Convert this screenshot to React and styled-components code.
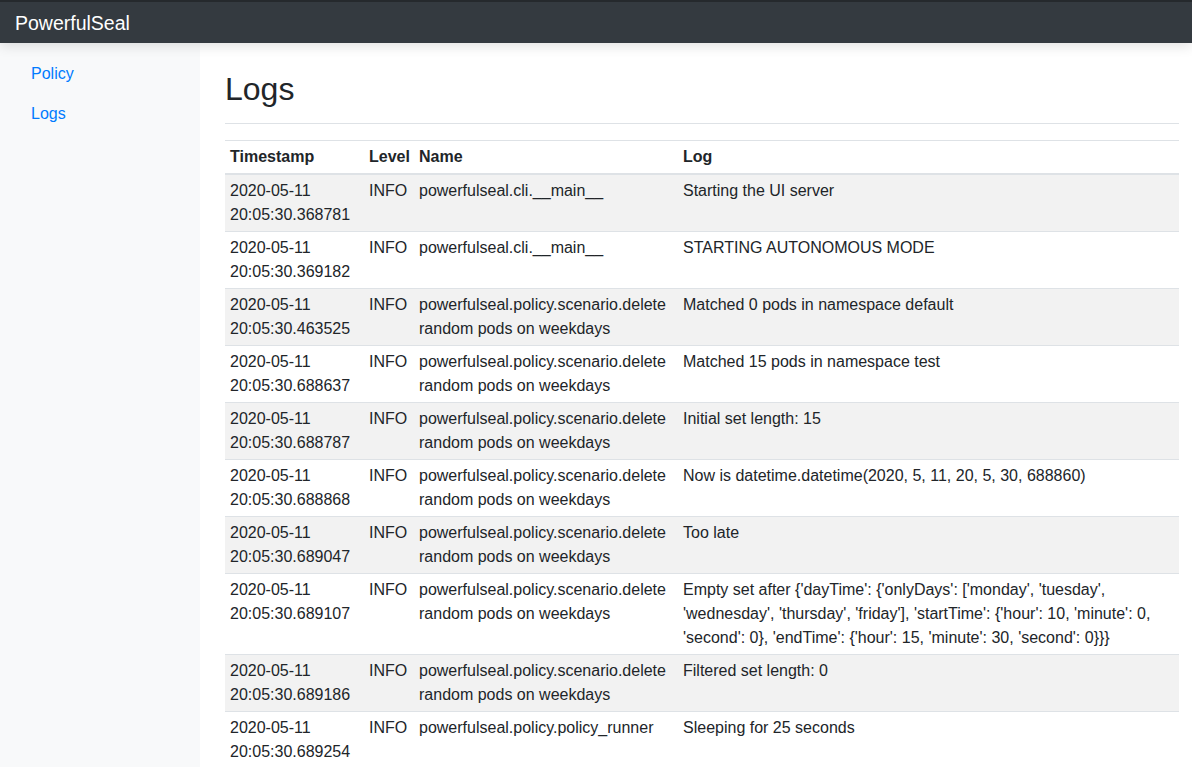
import React from 'react';
import styled, { createGlobalStyle } from 'styled-components';

const GlobalStyle = createGlobalStyle`
    * { box-sizing: border-box; }
    body {
        margin: 0;
        font-family: "Liberation Sans", Arial, sans-serif;
        font-size: 16px;
        line-height: 1.5;
        color: #212529;
        background: #fff;
    }
`;

const Navbar = styled.nav`
    position: relative;
    z-index: 2;
    height: 43px;
    background: #343a40;
    border-top: 2px solid #25292d;
    display: flex;
    align-items: center;
    padding: 0 15px;
    box-shadow: 0 3px 12px rgba(0, 0, 0, 0.12);
`;

const Brand = styled.a`
    color: #fff;
    font-size: 19.5px;
    line-height: 30px;
    text-decoration: none;
`;

const Body = styled.div`
    display: flex;
    min-height: calc(100vh - 43px);
`;

const Sidebar = styled.aside`
    width: 200px;
    flex: none;
    background: #f8f9fa;
    padding: 11px 15px 0;
`;

const NavList = styled.ul`
    list-style: none;
    margin: 0;
    padding: 0;
`;

const NavLink = styled.a`
    display: block;
    padding: 8px 16px;
    color: #007bff;
    text-decoration: none;
`;

const Main = styled.main`
    flex: 1;
    min-width: 0;
    padding: 27px 13px 0 25px;
`;

const Title = styled.h1`
    margin: 0 0 16px;
    padding-bottom: 15px;
    font-size: 32px;
    font-weight: 500;
    line-height: 1.2;
    border-bottom: 1px solid #dee2e6;
`;

const Table = styled.table`
    width: 100%;
    border-collapse: collapse;
    table-layout: fixed;
`;

const Th = styled.th`
    width: ${p => p.$w || 'auto'};
    text-align: left;
    font-weight: bold;
    padding: 4px 5px;
    border-top: 1px solid #dee2e6;
    border-bottom: 2px solid #dee2e6;
    vertical-align: bottom;
`;

const Row = styled.tr`
    background: ${p => (p.$odd ? '#f2f2f2' : 'transparent')};
`;

const Td = styled.td`
    padding: 4px 5px;
    border-top: 1px solid #dee2e6;
    vertical-align: top;
`;

const Stamp = styled.span`
    display: block;
`;

const NAME = 'powerfulseal.policy.scenario.delete random pods on weekdays';

const logs = [
    ['20:05:30.368781', 'powerfulseal.cli.__main__', 'Starting the UI server'],
    ['20:05:30.369182', 'powerfulseal.cli.__main__', 'STARTING AUTONOMOUS MODE'],
    ['20:05:30.463525', NAME, 'Matched 0 pods in namespace default'],
    ['20:05:30.688637', NAME, 'Matched 15 pods in namespace test'],
    ['20:05:30.688787', NAME, 'Initial set length: 15'],
    ['20:05:30.688868', NAME, 'Now is datetime.datetime(2020, 5, 11, 20, 5, 30, 688860)'],
    ['20:05:30.689047', NAME, 'Too late'],
    [
        '20:05:30.689107',
        NAME,
        "Empty set after {'dayTime': {'onlyDays': ['monday', 'tuesday', 'wednesday', 'thursday', 'friday'], 'startTime': {'hour': 10, 'minute': 0, 'second': 0}, 'endTime': {'hour': 15, 'minute': 30, 'second': 0}}}",
    ],
    ['20:05:30.689186', NAME, 'Filtered set length: 0'],
    ['20:05:30.689254', 'powerfulseal.policy.policy_runner', 'Sleeping for 25 seconds'],
];

const App = () => (
    <>
        <GlobalStyle />
        <Navbar>
            <Brand href="#">PowerfulSeal</Brand>
        </Navbar>
        <Body>
            <Sidebar>
                <NavList>
                    <li><NavLink href="#">Policy</NavLink></li>
                    <li><NavLink href="#">Logs</NavLink></li>
                </NavList>
            </Sidebar>
            <Main>
                <Title>Logs</Title>
                <Table>
                    <thead>
                        <tr>
                            <Th $w="139px">Timestamp</Th>
                            <Th $w="50px">Level</Th>
                            <Th $w="264px">Name</Th>
                            <Th>Log</Th>
                        </tr>
                    </thead>
                    <tbody>
                        {logs.map(([time, name, msg], i) => (
                            <Row key={time} $odd={i % 2 === 0}>
                                <Td>
                                    <Stamp>2020-05-11</Stamp>
                                    <Stamp>{time}</Stamp>
                                </Td>
                                <Td>INFO</Td>
                                <Td>{name}</Td>
                                <Td>{msg}</Td>
                            </Row>
                        ))}
                    </tbody>
                </Table>
            </Main>
        </Body>
    </>
);

export default App;
